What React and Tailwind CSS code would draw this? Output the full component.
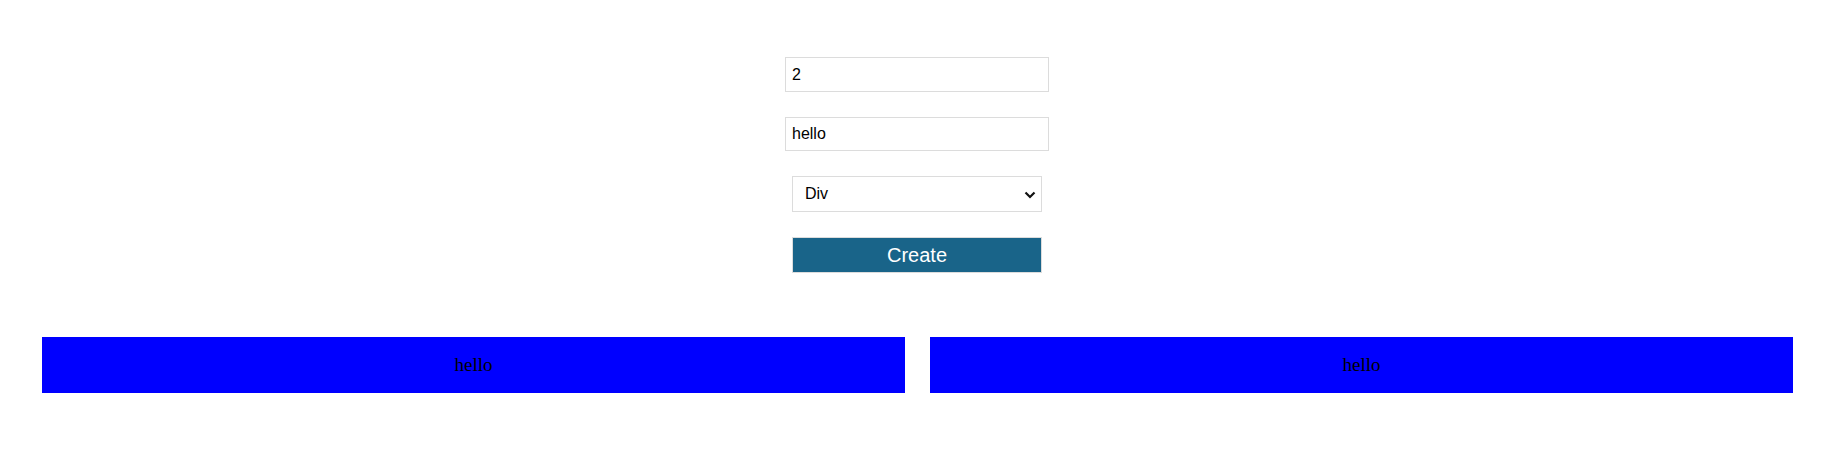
import React, { useState } from 'react';

export default function App() {
  const [count, setCount] = useState('2');
  const [text, setText] = useState('hello');
  const [tag, setTag] = useState('div');

  const items = Array.from({ length: Number(count) || 0 });

  return (
    <main className="w-[1837px] min-h-[470px] bg-white font-['Liberation_Sans',Arial,sans-serif]">
      <form className="flex flex-col items-center gap-[25px] pt-[57px] pr-[3px]" onSubmit={e => e.preventDefault()}>
        <input
          type="number"
          value={count}
          onChange={e => setCount(e.target.value)}
          className="w-[264px] h-[35px] border border-[#dcdcdc] px-[6px] text-[16px] text-black outline-none [appearance:textfield] [&::-webkit-inner-spin-button]:appearance-none"
        />
        <input
          type="text"
          value={text}
          onChange={e => setText(e.target.value)}
          className="w-[264px] h-[34px] border border-[#dcdcdc] px-[6px] text-[16px] text-black outline-none"
        />
        <div className="relative w-[250px] h-[36px]">
          <select
            value={tag}
            onChange={e => setTag(e.target.value)}
            className="w-full h-full appearance-none border border-[#dcdcdc] bg-white pl-[12px] text-[16px] text-black outline-none"
          >
            <option value="div">Div</option>
            <option value="p">Paragraph</option>
            <option value="span">Span</option>
          </select>
          <svg className="pointer-events-none absolute right-[6px] top-[15px]" width="12" height="8" viewBox="0 0 12 8">
            <path d="M1.5 1.5 L6 6 L10.5 1.5" fill="none" stroke="#111" strokeWidth="2.2" />
          </svg>
        </div>
        <button type="submit" className="w-[250px] h-[36px] border border-[#dcdcdc] bg-[#196489] text-white text-[20px] leading-none">
          Create
        </button>
      </form>

      <div className="flex gap-[25px] pl-[42px] pt-[64px]">
        {items.map((_, i) => (
          <div key={i} className="w-[863px] h-[56px] bg-[#0000ff] flex items-center justify-center font-['Liberation_Serif','Times_New_Roman',serif] text-[19px] text-black">
            {text}
          </div>
        ))}
      </div>
    </main>
  );
}
